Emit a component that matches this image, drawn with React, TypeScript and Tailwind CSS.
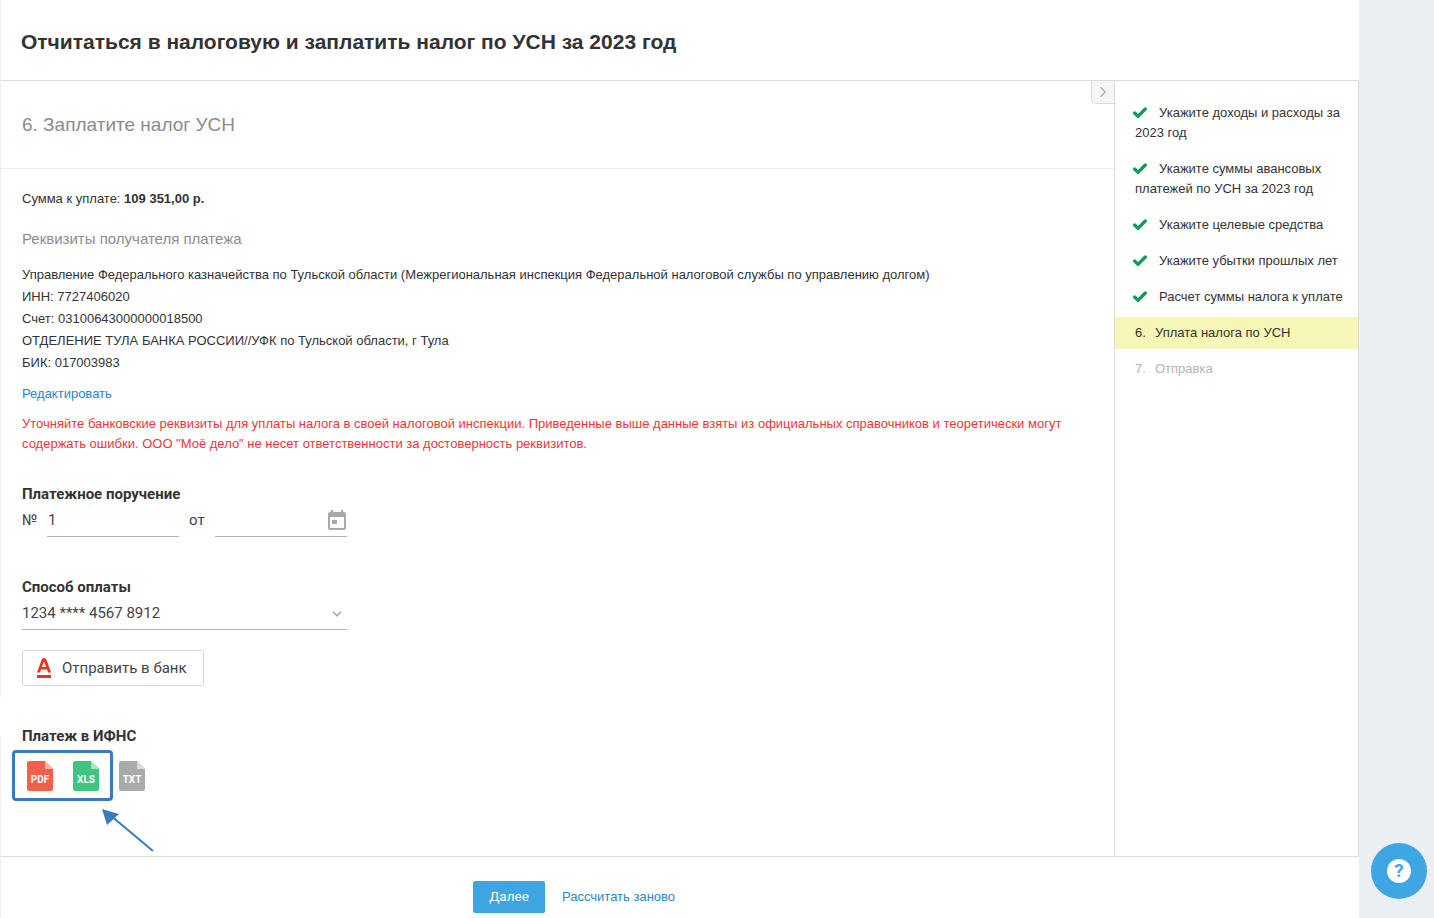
import { Check, ChevronDown, ChevronRight } from 'lucide-react';

const arial = 'font-["Liberation_Sans",Arial,sans-serif]';

const steps = [
  { text: 'Укажите доходы и расходы за 2023 год' },
  { text: 'Укажите суммы авансовых платежей по УСН за 2023 год' },
  { text: 'Укажите целевые средства' },
  { text: 'Укажите убытки прошлых лет' },
  { text: 'Расчет суммы налога к уплате' },
];

const FileIcon = ({ label, body, fold }: { label: string; body: string; fold: string }) => (
  <div className="relative w-[26px] h-[30px]">
    <svg width="26" height="30" viewBox="0 0 26 30" className="block">
      <path d="M2 0H18L26 8V28a2 2 0 0 1-2 2H2a2 2 0 0 1-2-2V2a2 2 0 0 1 2-2z" fill={body} />
      <path d="M18 0L26 8H18z" fill={fold} />
    </svg>
    <span className='absolute inset-x-0 top-[13px] text-center text-[10px] leading-[12px] font-bold text-white font-["Roboto",sans-serif]'>
      {label}
    </span>
  </div>
);

const App = () => {
  return (
    <div className={`h-[918px] w-[1434px] overflow-hidden bg-[#ebeff2] text-[#333] ${arial}`}>
      <div className="relative flex h-full w-[1359px] flex-col border-l border-l-[#ebeff2] bg-white">
        <header className="flex h-[81px] shrink-0 items-center border-b border-[#dcdcdc] pl-5 pt-[3px]">
          <h1 className="text-[21px] font-bold text-[#333]">
            Отчитаться в налоговую и заплатить налог по УСН за 2023 год
          </h1>
        </header>

        <div className="flex min-h-0 flex-1">
          <main className="relative w-[1113px] shrink-0">
            <div className="absolute -left-px top-[616px] h-[40px] w-px bg-white" />
            <button className="absolute right-0 top-0 flex h-[23px] w-[23px] items-center justify-center rounded-bl-[5px] border border-r-0 border-t-0 border-[#dcdcdc] bg-[#f5f5f5] text-[#aaa]">
              <ChevronRight size={18} strokeWidth={1.5} />
            </button>

            <h2 className="pl-[21px] pt-[32px] text-[19px] leading-[24px] text-[#8c8c8c]">6. Заплатите налог УСН</h2>
            <div className="mt-[31px] h-px bg-[#ececec]" />

            <div className="pl-[21px]">
              <p className="mt-[21px] text-[13px] leading-[18px]">
                Сумма к уплате: <b>109 351,00 р.</b>
              </p>
              <p className="mt-[22px] text-[15px] leading-[18px] text-[#8c8c8c]">Реквизиты получателя платежа</p>
              <div className="mt-[16px] text-[13px] leading-[22px] text-[#333]">
                <div>Управление Федерального казначейства по Тульской области (Межрегиональная инспекция Федеральной налоговой службы по управлению долгом)</div>
                <div>ИНН: 7727406020</div>
                <div>Счет: 03100643000000018500</div>
                <div>ОТДЕЛЕНИЕ ТУЛА БАНКА РОССИИ//УФК по Тульской области, г Тула</div>
                <div>БИК: 017003983</div>
              </div>
              <a className="mt-[11px] block text-[13px] leading-[18px] text-[#2a87c8]">Редактировать</a>
              <p className="mt-[11px] w-[1060px] text-[13px] leading-[20px] text-[#f1353b]">
                Уточняйте банковские реквизиты для уплаты налога в своей налоговой инспекции. Приведенные выше данные взяты из официальных справочников и теоретически могут содержать ошибки. ООО "Моё дело" не несет ответственности за достоверность реквизитов.
              </p>

              <div className='font-["Roboto",sans-serif]'>
                <h3 className="mt-[30px] text-[15px] font-bold leading-[20px]">Платежное поручение</h3>
                <div className="mt-[3px] flex h-[30px] w-[325px] text-[15px] text-[#444]">
                  <span className="w-[25px] pt-[2px]">№</span>
                  <div className="w-[132px] border-b border-[#b4b4b4] pl-[1px] pt-[2px]">1</div>
                  <span className="w-[36px] pl-[10px] pt-[2px]">от</span>
                  <div className="flex w-[132px] justify-end border-b border-[#b4b4b4] pr-[1px] pt-[3px]">
                    <svg width="18" height="20" viewBox="0 0 18 20" fill="#a9a9a9">
                      <path d="M3 0h2v2h8V0h2v2h1a2 2 0 0 1 2 2v14a2 2 0 0 1-2 2H2a2 2 0 0 1-2-2V4a2 2 0 0 1 2-2h1zM2 7v11h14V7z" />
                      <rect x="4" y="10" width="5" height="4" />
                    </svg>
                  </div>
                </div>

                <h3 className="mt-[40px] text-[15px] font-bold leading-[20px]">Способ оплаты</h3>
                <div className="mt-[4px] flex h-[29px] w-[325px] items-start justify-between border-b border-[#b4b4b4] pr-[3px] pt-[1px] text-[15px] text-[#444]">
                  <span>1234 **** 4567 8912</span>
                  <ChevronDown size={14} strokeWidth={3} className="mt-[5px] text-[#aaa]" />
                </div>

                <button className="mt-[20px] flex h-[36px] w-[182px] items-center rounded-[3px] border border-[#d4d4d4] bg-white pl-[14px] text-[15px] text-[#444]">
                  <svg width="14" height="20" viewBox="0 0 14 20" fill="#ef3124" className="mr-[11px]">
                    <path d="M7 0c1.600 0 2.200 1 2.600 2L14 14.500h-3l-1-3H4l-1 3H0L4.500 2C4.900 1 5.500 0 7 0zM7 3.500L4.800 9h4.400z" />
                    <rect y="17" width="14" height="3" />
                  </svg>
                  Отправить в банк
                </button>

                <h3 className="mt-[40px] text-[15px] font-bold leading-[20px]">Платеж в ИФНС</h3>
                <div className="relative mt-[15px] flex gap-[20px] pl-[5px]">
                  <FileIcon label="PDF" body="#f2604c" fold="#f8b5aa" />
                  <FileIcon label="XLS" body="#40c47f" fold="#a8e4c5" />
                  <FileIcon label="TXT" body="#aaaaaa" fold="#dcdcdc" />
                </div>
              </div>
            </div>

            {/* highlight annotation over the export icons */}
            <div className="absolute left-[11px] top-[669px] h-[51px] w-[101px] rounded-[4px] border-[3px] border-[#3a7abf]" />
            <svg className="absolute left-[95px] top-[725px]" width="62" height="50" viewBox="0 0 62 50">
              <path d="M57 45L14 9" stroke="#3a7abf" strokeWidth="2" fill="none" />
              <path d="M6 3L23 8L11 19z" fill="#3a7abf" />
            </svg>
          </main>

          <aside className="flex-1 border-x border-[#dcdcdc] pt-[22px] text-[13px] leading-[20px]">
            {steps.map((s) => (
              <div key={s.text} className="mb-[16px] pl-[20px] pr-[10px]">
                <Check size={16} strokeWidth={5} className="mr-[11px] inline-block align-[-4px] -ml-[3px] text-[#0f9d58]" />
                {s.text}
              </div>
            ))}
            <div className="-mt-[6px] flex h-[32px] items-center bg-[#f6f6b6] pl-[20px]">
              <span className="w-[20px]">6.</span>Уплата налога по УСН
            </div>
            <div className="mt-[10px] flex pl-[20px] text-[#b4b4b4]">
              <span className="w-[20px]">7.</span>Отправка
            </div>
          </aside>
        </div>

        <footer className="flex h-[62px] shrink-0 items-center border-t border-[#dcdcdc] pl-[472px] pt-[23px] pb-[5px]">
          <button className='h-[32px] w-[72px] rounded-[2px] bg-[#3fa5e0] text-[13.5px] text-white font-["Roboto",sans-serif]'>Далее</button>
          <a className="ml-[17px] text-[13px] text-[#2a87c8]">Рассчитать заново</a>
        </footer>
      </div>

      <button className="fixed left-[1371px] top-[843px] flex h-[56px] w-[56px] items-center justify-center rounded-full bg-[#3ea6e2]">
        <span className='flex h-[24px] w-[24px] items-center justify-center rounded-full bg-white text-[19px] font-bold text-[#3ea6e2] font-["Roboto",sans-serif]'>?</span>
      </button>
    </div>
  );
};

export default App;
